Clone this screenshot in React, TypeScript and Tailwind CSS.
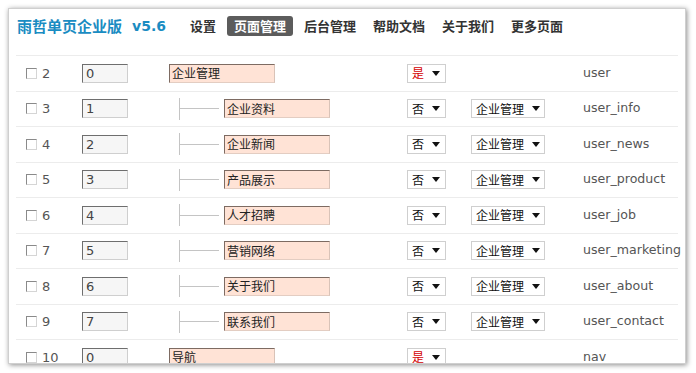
import React from 'react';

type Row = {
  id: number;
  order: number;
  title: string;
  top: boolean;
  name: string;
};

const rows: Row[] = [
  { id: 2, order: 0, title: '企业管理', top: true, name: 'user' },
  { id: 3, order: 1, title: '企业资料', top: false, name: 'user_info' },
  { id: 4, order: 2, title: '企业新闻', top: false, name: 'user_news' },
  { id: 5, order: 3, title: '产品展示', top: false, name: 'user_product' },
  { id: 6, order: 4, title: '人才招聘', top: false, name: 'user_job' },
  { id: 7, order: 5, title: '营销网络', top: false, name: 'user_marketing' },
  { id: 8, order: 6, title: '关于我们', top: false, name: 'user_about' },
  { id: 9, order: 7, title: '联系我们', top: false, name: 'user_contact' },
  { id: 10, order: 0, title: '导航', top: true, name: 'nav' },
];

const nav = ['设置', '页面管理', '后台管理', '帮助文档', '关于我们', '更多页面'];

function Arrow() {
  return (
    <svg width="8" height="5" viewBox="0 0 8 5" className="shrink-0">
      <path d="M0 0 L8 0 L4 5 Z" fill="#111" />
    </svg>
  );
}

function TitleBox({ text }: { text: string }) {
  return (
    <div className="w-[106px] h-[19px] shrink-0 flex items-center pl-[2px] bg-[#ffe3d6] border-t border-l border-[#7d6b62] border-r-[#d9c3b8] border-b-[#e3cdc2] border-r border-b text-[12px] text-[#222] leading-none">
      {text}
    </div>
  );
}

function TableRow({ r }: { r: Row }) {
  return (
    <div className="flex items-center h-[35.5px] shrink-0 border-b border-[#ececec] whitespace-nowrap">
      <div className="w-[66px] shrink-0 pl-[10px] flex items-center">
        <span className="w-[11px] h-[11px] border-t border-l border-[#8a8a8a] border-r border-b border-r-[#d5d5d5] border-b-[#d5d5d5] bg-white" />
        <span className="ml-[5px] text-[13px] text-[#555] font-['DejaVu_Sans',sans-serif]">{r.id}</span>
      </div>
      <div className="w-[87px] shrink-0">
        <div className="w-[46px] h-[19px] flex items-center pl-[3px] bg-[#f6f6f6] border-t border-l border-[#6e6e6e] border-r border-b border-r-[#cfcfcf] border-b-[#cfcfcf] text-[13px] text-[#444] font-['DejaVu_Sans',sans-serif]">
          {r.order}
        </div>
      </div>
      <div className="w-[238px] shrink-0 flex items-center">
        {r.top ? (
          <TitleBox text={r.title} />
        ) : (
          <div className="flex items-center pl-[10px]">
            <div className="w-px h-[22px] bg-[#c4c4c4]" />
            <div className="w-[39px] h-px bg-[#c4c4c4]" />
            <div className="ml-[5px]">
              <TitleBox text={r.title} />
            </div>
          </div>
        )}
      </div>
      <div className="w-[64px] shrink-0">
        <div className="w-[39px] h-[19px] flex items-center justify-between pl-[4px] pr-[5px] bg-white border border-[#cfcfcf] text-[12px] leading-none">
          <span className={r.top ? 'text-[#d40000]' : 'text-[#111]'}>{r.top ? '是' : '否'}</span>
          <Arrow />
        </div>
      </div>
      <div className="w-[112px] shrink-0">
        {!r.top && (
          <div className="w-[74px] h-[19px] flex items-center justify-between pl-[4px] pr-[4px] bg-white border border-[#cfcfcf] text-[12px] text-[#111] leading-none">
            <span>企业管理</span>
            <Arrow />
          </div>
        )}
      </div>
      <div className="shrink-0 text-[12.6px] text-[#555] font-['DejaVu_Sans',sans-serif]">{r.name}</div>
    </div>
  );
}

export default function App() {
  return (
    <div className="w-[696px] h-[373px] bg-white pt-[8px] pl-[8px] font-['Noto_Sans_CJK_SC',sans-serif]">
      <div className="w-[678px] h-[356px] bg-white border border-[#cfcfcf] shadow-[1px_1px_5px_rgba(0,0,0,0.45)] overflow-hidden flex flex-col px-[7px]">
        <div className="flex items-center h-[32px] shrink-0 pt-[1px] leading-none">
          <div className="pl-[1px] text-[15px] font-bold text-[#1a8cc2] flex items-center">
            <span>雨哲单页企业版</span>
            <span className="ml-[10px] text-[14px] font-['DejaVu_Sans',sans-serif]">v5.6</span>
          </div>
          <div className="ml-[18px] flex items-center gap-[5px]">
            {nav.map((n) => (
              <div
                key={n}
                className={
                  n === '页面管理'
                    ? 'h-[20px] px-[7px] flex items-center rounded-[3px] bg-[#5c5c5c] text-white text-[13px] font-bold'
                    : 'h-[20px] px-[6px] flex items-center text-[#333] text-[13px] font-bold'
                }
              >
                {n}
              </div>
            ))}
          </div>
        </div>
        <div className="mt-[14px] border-t border-[#ececec] flex flex-col">
          {rows.map((r) => (
            <TableRow key={r.id} r={r} />
          ))}
        </div>
      </div>
    </div>
  );
}
